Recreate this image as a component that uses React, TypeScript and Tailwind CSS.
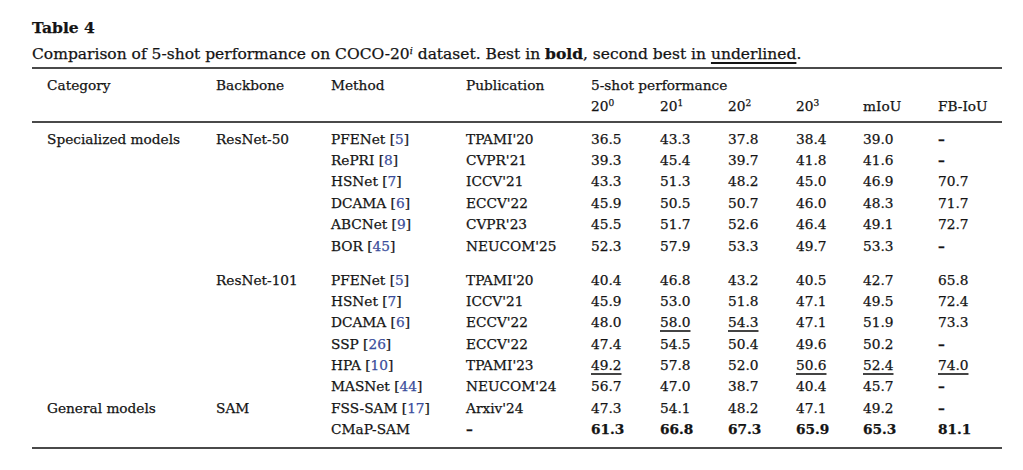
import React from "react";

type Cell = { v: string; u?: boolean; b?: boolean };
type Row = {
  cat?: string;
  bb?: string;
  m: string;
  cite?: string;
  pub: string;
  vals: Cell[];
};

const c = (v: string, u = false, b = false): Cell => ({ v, u, b });

const group1: Row[] = [
  { cat: "Specialized models", bb: "ResNet-50", m: "PFENet", cite: "5", pub: "TPAMI'20", vals: [c("36.5"), c("43.3"), c("37.8"), c("38.4"), c("39.0"), c("–")] },
  { m: "RePRI", cite: "8", pub: "CVPR'21", vals: [c("39.3"), c("45.4"), c("39.7"), c("41.8"), c("41.6"), c("–")] },
  { m: "HSNet", cite: "7", pub: "ICCV'21", vals: [c("43.3"), c("51.3"), c("48.2"), c("45.0"), c("46.9"), c("70.7")] },
  { m: "DCAMA", cite: "6", pub: "ECCV'22", vals: [c("45.9"), c("50.5"), c("50.7"), c("46.0"), c("48.3"), c("71.7")] },
  { m: "ABCNet", cite: "9", pub: "CVPR'23", vals: [c("45.5"), c("51.7"), c("52.6"), c("46.4"), c("49.1"), c("72.7")] },
  { m: "BOR", cite: "45", pub: "NEUCOM'25", vals: [c("52.3"), c("57.9"), c("53.3"), c("49.7"), c("53.3"), c("–")] },
];

const group2: Row[] = [
  { bb: "ResNet-101", m: "PFENet", cite: "5", pub: "TPAMI'20", vals: [c("40.4"), c("46.8"), c("43.2"), c("40.5"), c("42.7"), c("65.8")] },
  { m: "HSNet", cite: "7", pub: "ICCV'21", vals: [c("45.9"), c("53.0"), c("51.8"), c("47.1"), c("49.5"), c("72.4")] },
  { m: "DCAMA", cite: "6", pub: "ECCV'22", vals: [c("48.0"), c("58.0", true), c("54.3", true), c("47.1"), c("51.9"), c("73.3")] },
  { m: "SSP", cite: "26", pub: "ECCV'22", vals: [c("47.4"), c("54.5"), c("50.4"), c("49.6"), c("50.2"), c("–")] },
  { m: "HPA", cite: "10", pub: "TPAMI'23", vals: [c("49.2", true), c("57.8"), c("52.0"), c("50.6", true), c("52.4", true), c("74.0", true)] },
  { m: "MASNet", cite: "44", pub: "NEUCOM'24", vals: [c("56.7"), c("47.0"), c("38.7"), c("40.4"), c("45.7"), c("–")] },
  { cat: "General models", bb: "SAM", m: "FSS-SAM", cite: "17", pub: "Arxiv'24", vals: [c("47.3"), c("54.1"), c("48.2"), c("47.1"), c("49.2"), c("–")] },
  { m: "CMaP-SAM", pub: "–", vals: [c("61.3", false, true), c("66.8", false, true), c("67.3", false, true), c("65.9", false, true), c("65.3", false, true), c("81.1", false, true)] },
];

const cols =
  "grid grid-cols-[169px_115px_135px_125px_69px_68px_68px_67px_75px_64px] pl-[15px]";

function Dash() {
  return <span className="font-bold">–</span>;
}

function DataRow({ r }: { r: Row }) {
  return (
    <div className={`${cols} h-[21.4px] leading-[21.4px] whitespace-nowrap`}>
      <div>{r.cat ?? ""}</div>
      <div>{r.bb ?? ""}</div>
      <div>
        {r.m}
        {r.cite && (
          <>
            {" "}[<span className="text-[#3a4d9c]">{r.cite}</span>]
          </>
        )}
      </div>
      <div>{r.pub === "–" ? <Dash /> : r.pub}</div>
      {r.vals.map((v, i) => (
        <div key={i}>
          {v.v === "–" ? (
            <Dash />
          ) : (
            <span
              className={`${v.u ? "underline decoration-[1.5px] underline-offset-[3px] decoration-[#444]" : ""} ${v.b ? "font-bold" : ""}`}
            >
              {v.v}
            </span>
          )}
        </div>
      ))}
    </div>
  );
}

export default function App() {
  return (
    <div className="w-[1023px] h-[470px] bg-white text-[#141414] font-['DejaVu_Serif',serif] [-webkit-text-stroke:0.25px] pt-[18px] pl-[32px]">
      <div className="w-[970px]">
        <div className="text-[15.5px] leading-[20px] font-bold">Table 4</div>
        <div className="text-[15.5px] leading-[20px] mt-[6px] whitespace-nowrap">
          Comparison of 5-shot performance on COCO-20
          <sup className="italic text-[9.5px]">i</sup> dataset. Best in{" "}
          <span className="font-bold">bold</span>, second best in{" "}
          <span className="underline decoration-[1.5px] underline-offset-[3px]">underlined</span>.
        </div>
        <div className="mt-[3px] h-[2px] bg-[#4a4a4a]" />
        <div className="text-[13.7px]">
          <div className={`${cols} mt-[6px] h-[20.7px] leading-[20.7px] whitespace-nowrap`}>
            <div>Category</div>
            <div>Backbone</div>
            <div>Method</div>
            <div>Publication</div>
            <div className="col-span-6">5-shot performance</div>
          </div>
          <div className={`${cols} h-[20.7px] leading-[20.7px] whitespace-nowrap`}>
            <div />
            <div />
            <div />
            <div />
            <div>
              20<sup className="text-[9px]">0</sup>
            </div>
            <div>
              20<sup className="text-[9px]">1</sup>
            </div>
            <div>
              20<sup className="text-[9px]">2</sup>
            </div>
            <div>
              20<sup className="text-[9px]">3</sup>
            </div>
            <div>mIoU</div>
            <div>FB-IoU</div>
          </div>
          <div className="mt-[4.3px] h-[2px] bg-[#4a4a4a]" />
          <div className="mt-[6px]">
            {group1.map((r, i) => (
              <DataRow key={i} r={r} />
            ))}
          </div>
          <div className="mt-[12.5px]">
            {group2.map((r, i) => (
              <DataRow key={i} r={r} />
            ))}
          </div>
          <div className="mt-[6px] h-[2px] bg-[#4a4a4a]" />
        </div>
      </div>
    </div>
  );
}
